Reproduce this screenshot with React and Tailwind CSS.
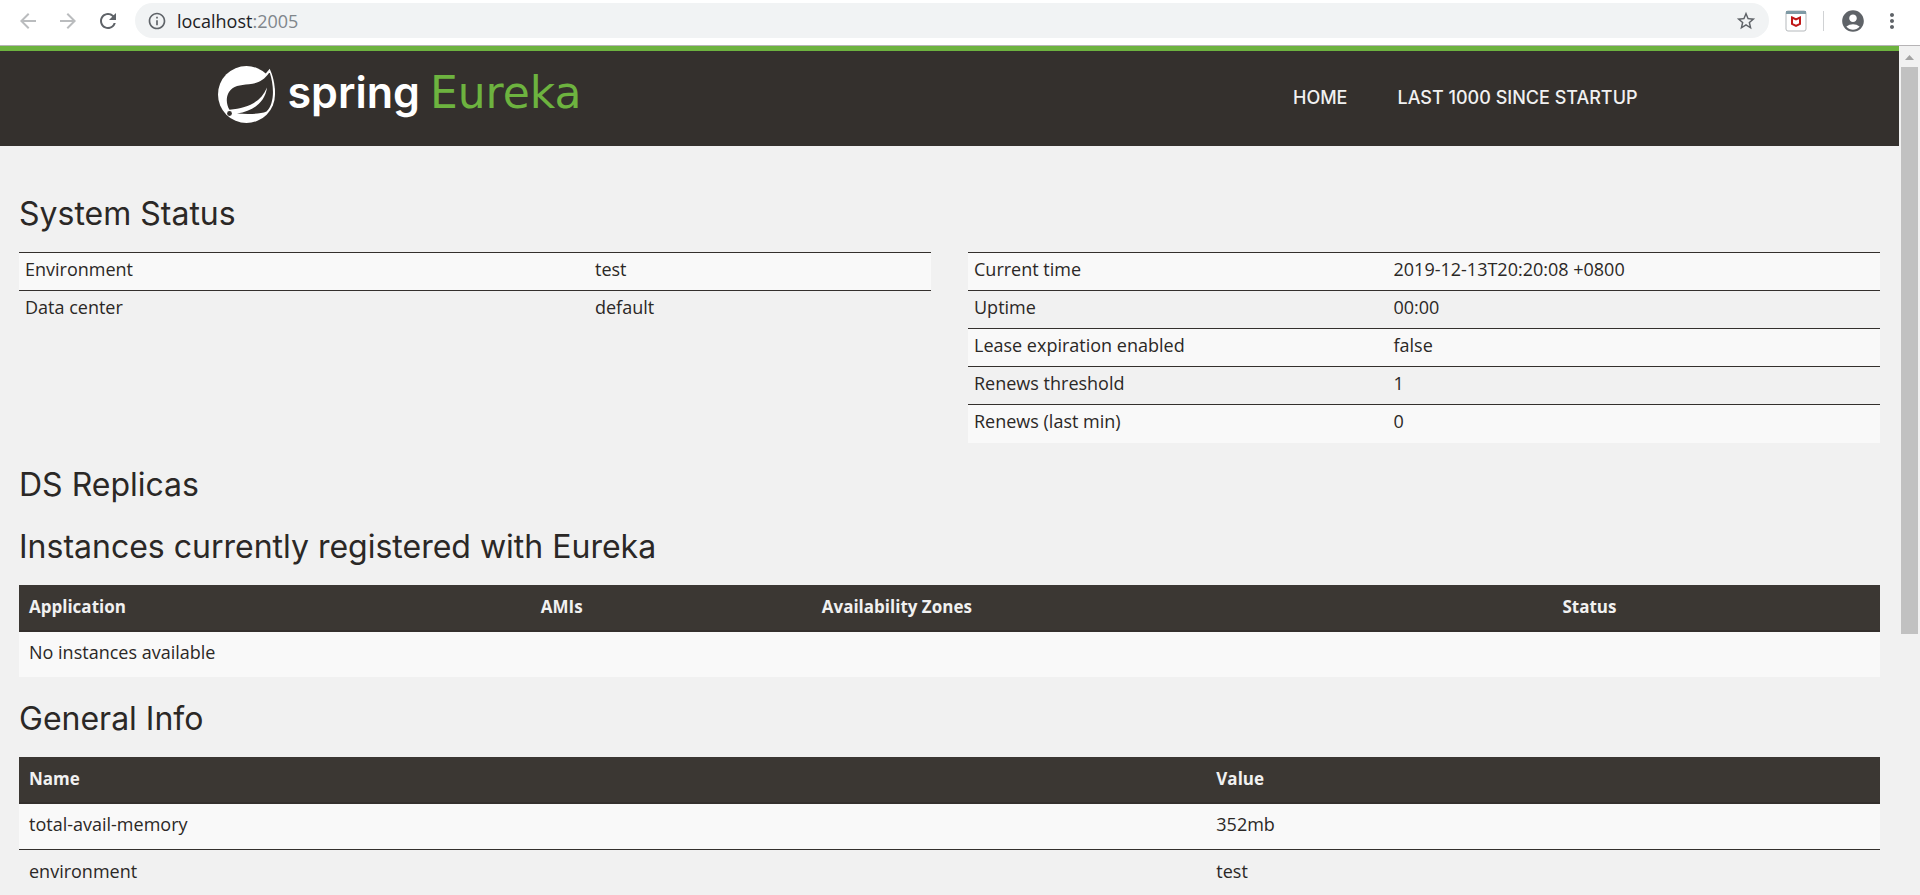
import React from 'react';
import { MdArrowBack, MdArrowForward, MdRefresh, MdInfoOutline, MdStarBorder, MdAccountCircle, MdMoreVert } from 'react-icons/md';

const leftStatus = [
  ['Environment', 'test'],
  ['Data center', 'default'],
];

const rightStatus = [
  ['Current time', '2019-12-13T20:20:08 +0800'],
  ['Uptime', '00:00'],
  ['Lease expiration enabled', 'false'],
  ['Renews threshold', '1'],
  ['Renews (last min)', '0'],
];

const generalInfo = [
  ['total-avail-memory', '352mb'],
  ['environment', 'test'],
];

const SpringLogo = () => (
  <svg viewBox="0 0 58 57" className="w-[58px] h-[57px] shrink-0">
    <circle cx="28.5" cy="28.5" r="28.5" fill="#fff" />
    <path d="M44 12L51.700 2.800C54.500 9 57 17 57 28L44 40Z" fill="#fff" />
    <path
      d="M51 7C46 14 40 17.500 31 18.300C22 19 15 20 11 26C7.500 32 8.500 39 11.500 43.800C30 42 43 36 49 21.500C47 36 36 45 19 47.600C30 48.200 42 48.300 48.500 45.500C57 37 56 20 51.900 7Z"
      fill="#34302d"
    />
    <circle cx="11.5" cy="47.5" r="2.4" fill="#34302d" />
  </svg>
);

const Toolbar = () => (
  <div className="flex items-center h-[46px] shrink-0 bg-white border-b border-[#b6b4b6] pb-1 px-4 text-[#5f6368]">
    <button aria-label="Back" className="text-[#babcbe]"><MdArrowBack size={24} /></button>
    <button aria-label="Forward" className="ml-4 text-[#babcbe]"><MdArrowForward size={24} /></button>
    <button aria-label="Reload" className="ml-4"><MdRefresh size={24} /></button>
    <div className="flex items-center flex-1 h-[35px] ml-[15px] px-3 rounded-full bg-[#f1f3f4]">
      <MdInfoOutline size={20} />
      <div className="flex-1 ml-2.5 font-['Open_Sans',sans-serif] text-lg leading-6 text-[#202124]">
        localhost<span className="text-[#80868b]">:2005</span>
      </div>
      <button aria-label="Bookmark"><MdStarBorder size={22} /></button>
    </div>
    <button aria-label="Extension" className="ml-4">
      <svg viewBox="0 0 22 22" className="w-[22px] h-[22px]">
        <rect x="1" y="1" width="20" height="20" rx="2" fill="#fff" stroke="#b5b9bc" />
        <path d="M1 1h20v3H1z" fill="#7f9aa5" />
        <path d="M7 7.500L11 9.500L15 7.500V14L11 16L7 14Z" fill="none" stroke="#c01818" strokeWidth="2" />
      </svg>
    </button>
    <div className="w-px h-5 mx-4 bg-[#d0d2d4]"></div>
    <button aria-label="Profile"><MdAccountCircle size={26} /></button>
    <button aria-label="Menu" className="ml-3.5"><MdMoreVert size={24} /></button>
  </div>
);

const Header = () => (
  <header className="bg-[#34302d] border-t-[5px] border-[#6db33f]">
    <div className="flex items-start justify-between w-full max-w-[1464px] h-[95px] mx-auto pr-[19px]">
      <a href="#home" className="flex items-start pt-[15px] leading-[52px]">
        <SpringLogo />
        <span className="flex items-baseline gap-2.5 ml-3">
          <span className="font-['Inter',sans-serif] font-semibold text-[43px] text-white">spring</span>
          <span className="font-['DejaVu_Sans',sans-serif] text-[44px] text-[#6db33f]">Eureka</span>
        </span>
      </a>
      <nav className="flex pt-[35px] font-['Inter',sans-serif] font-medium text-lg leading-6 text-[#f1f1f1]">
        <a href="#home" className="px-[25px]">HOME</a>
        <a href="#lastn" className="px-[25px]">LAST 1000 SINCE STARTUP</a>
      </nav>
    </div>
  </header>
);

const Heading = ({ children }) => (
  <h1 className="font-['Inter',sans-serif] text-[32px] leading-[36px] mb-5">{children}</h1>
);

const StatusTable = ({ rows, labelWidth }) => (
  <table className="w-full table-fixed self-start">
    <tbody>
      {rows.map(([label, value]) => (
        <tr key={label} className="h-[38px] border-t border-[#34302d] odd:bg-[#f9f9f9]">
          <td className={`${labelWidth} px-1.5 align-top pt-1`}>{label}</td>
          <td className="px-1.5 align-top pt-1">{value}</td>
        </tr>
      ))}
    </tbody>
  </table>
);

const Scrollbar = () => (
  <div className="flex flex-col items-center w-[21px] shrink-0 bg-[#f1f1f1]">
    <svg viewBox="0 0 21 21" className="w-[21px] h-[21px] shrink-0">
      <path d="M6 14L10.500 9L15 14Z" fill="#a3a3a3" />
    </svg>
    <div className="w-[17px] h-[567px] bg-[#c1c1c1]"></div>
  </div>
);

const App = () => {
  return (
    <div className="flex flex-col h-screen overflow-hidden">
      <Toolbar />
      <div className="flex flex-1 min-h-0">
        <div className="flex-1 overflow-hidden bg-[#f1f1f1] font-['Open_Sans',sans-serif] text-lg leading-[25px] text-[#2b2826]">
          <Header />
          <main className="px-[19px] pt-[50px]">
            {/* System Status */}
            <Heading>System Status</Heading>
            <div className="grid grid-cols-2 gap-[37px] mb-6">
              <StatusTable rows={leftStatus} labelWidth="w-[62.5%]" />
              <StatusTable rows={rightStatus} labelWidth="w-[46%]" />
            </div>

            {/* Replicas and instances */}
            <div className="mb-[26px]">
              <Heading>DS Replicas</Heading>
            </div>
            <Heading>Instances currently registered with Eureka</Heading>
            <table className="w-full table-fixed mb-6">
              <thead>
                <tr className="h-[46px] bg-[#3b3733] border-b-2 border-[#34302d] text-left text-[17px] text-[#f1f1f1]">
                  <th className="w-[27.5%] px-2.5 pb-0.5">Application</th>
                  <th className="w-[15.1%] px-2.5 pb-0.5">AMIs</th>
                  <th className="w-[39.8%] px-2.5 pb-0.5">Availability Zones</th>
                  <th className="px-2.5 pb-0.5">Status</th>
                </tr>
              </thead>
              <tbody>
                <tr className="h-[46px] bg-[#f9f9f9]">
                  <td colSpan="4" className="px-2.5 pb-1">No instances available</td>
                </tr>
              </tbody>
            </table>

            {/* General Info */}
            <Heading>General Info</Heading>
            <table className="w-full table-fixed">
              <thead>
                <tr className="h-[46px] bg-[#3b3733] border-b-2 border-[#34302d] text-left text-[17px] text-[#f1f1f1]">
                  <th className="w-[63.8%] px-2.5 pb-0.5">Name</th>
                  <th className="px-2.5 pb-0.5">Value</th>
                </tr>
              </thead>
              <tbody>
                {generalInfo.map(([name, value]) => (
                  <tr key={name} className="h-[47px] border-b border-[#34302d] odd:bg-[#f9f9f9]">
                    <td className="px-2.5 pb-1">{name}</td>
                    <td className="px-2.5 pb-1">{value}</td>
                  </tr>
                ))}
              </tbody>
            </table>
          </main>
        </div>
        <Scrollbar />
      </div>
    </div>
  );
};

export default App;
